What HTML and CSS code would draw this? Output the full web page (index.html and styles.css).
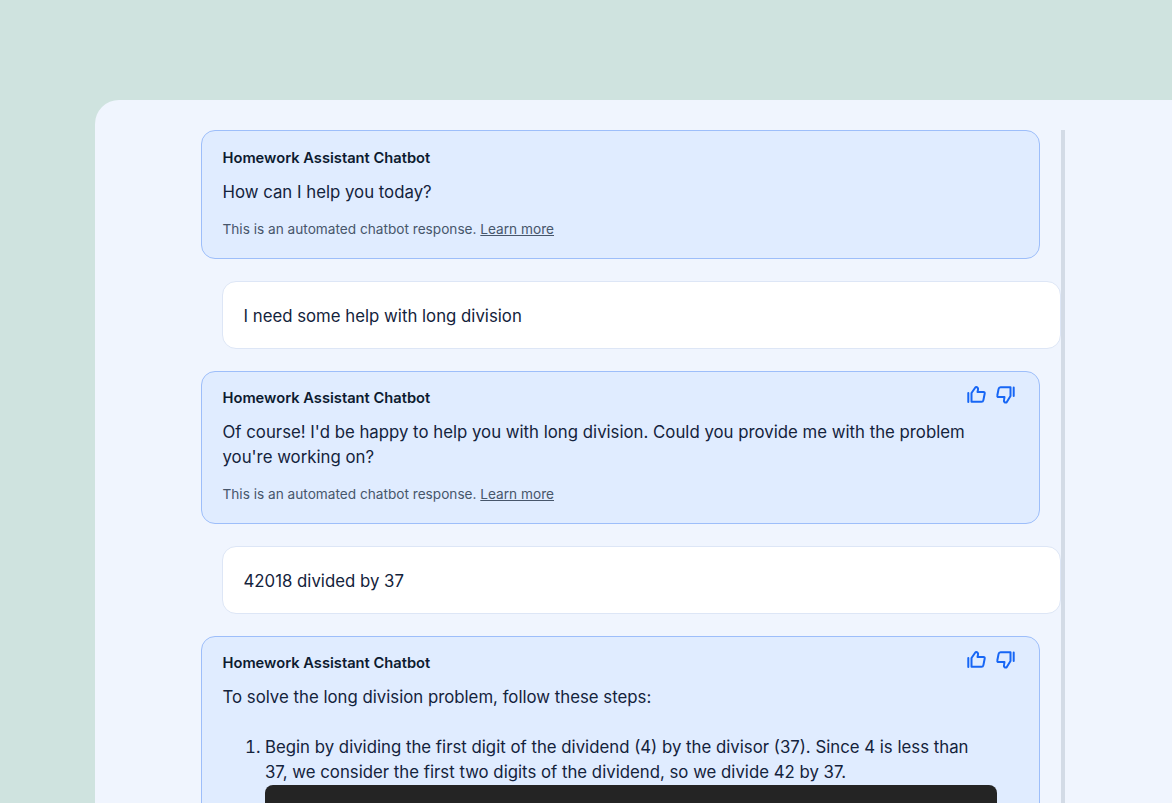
FILE: index.html
```html
<!DOCTYPE html>
<html lang="en">
<head>
<meta charset="utf-8">
<title>Homework Assistant Chatbot</title>
<link rel="stylesheet" href="styles.css">
</head>
<body>
<main class="panel">
  <div class="log">
    <article class="msg bot first">
      <header class="head"><h2 class="name">Homework Assistant Chatbot</h2></header>
      <p class="text">How can I help you today?</p>
      <p class="note">This is an automated chatbot response. <a href="#">Learn more</a></p>
    </article>
    <article class="msg user"><p class="text">I need some help with long division</p></article>
    <article class="msg bot second">
      <header class="head">
        <h2 class="name">Homework Assistant Chatbot</h2>
        <div class="votes">
          <svg class="icon" viewBox="0 0 20 20"><path d="M2.300 8v9M5.500 8 9.500 2.200c1.800-.4 2.900.9 2.500 2.600L11.500 7h6c.9 0 1.400.7 1.200 1.500l-1.300 6.600c-.2 1-.9 1.700-1.900 1.700H5.500z"/></svg>
          <svg class="icon" viewBox="0 0 20 20"><path d="M17.700 11V2.500M14.500 11 10.500 17.500c-1.800.4-2.900-.9-2.500-2.600l.5-2.900h-6c-.9 0-1.400-.7-1.200-1.500l1.300-6.600c.2-1 .9-1.700 1.900-1.700H14.500z"/></svg>
        </div>
      </header>
      <p class="text">Of course! I'd be happy to help you with long division. Could you provide me with the problem you're working on?</p>
      <p class="note">This is an automated chatbot response. <a href="#">Learn more</a></p>
    </article>
    <article class="msg user"><p class="text">42018 divided by 37</p></article>
    <article class="msg bot">
      <header class="head">
        <h2 class="name">Homework Assistant Chatbot</h2>
        <div class="votes">
          <svg class="icon" viewBox="0 0 20 20"><path d="M2.300 8v9M5.500 8 9.500 2.200c1.800-.4 2.900.9 2.500 2.600L11.500 7h6c.9 0 1.400.7 1.200 1.500l-1.300 6.600c-.2 1-.9 1.700-1.900 1.700H5.500z"/></svg>
          <svg class="icon" viewBox="0 0 20 20"><path d="M17.700 11V2.500M14.500 11 10.500 17.500c-1.800.4-2.900-.9-2.500-2.600l.5-2.900h-6c-.9 0-1.400-.7-1.200-1.500l1.300-6.600c.2-1 .9-1.700 1.900-1.700H14.500z"/></svg>
        </div>
      </header>
      <p class="text">To solve the long division problem, follow these steps:</p>
      <ol class="steps">
        <li><p class="step-text">Begin by dividing the first digit of the dividend (4) by the divisor (37). Since 4 is less than 37, we consider the first two digits of the dividend, so we divide 42 by 37.</p>
          <div class="code"></div>
        </li>
      </ol>
    </article>
  </div>
</main>
</body>
</html>
```
FILE: styles.css
```css
* { box-sizing: border-box; }
html, body { margin: 0; height: 100%; overflow: hidden; }
body {
  background: #cfe3df;
  padding: 100px 0 0 95px;
  font-family: Inter, "Liberation Sans", sans-serif;
  color: #14233c;
}
.panel {
  height: 900px;
  background: #f0f5fe;
  border-radius: 24px 0 0 0;
  padding: 30px 0 0 106px;
}
.log {
  width: 864px;
  height: 860px;
  border-right: 4px solid #d3dbe6;
  display: flex;
  flex-direction: column;
  gap: 22px;
  align-items: flex-start;
}
.msg { border-radius: 14px; flex: none; }
.bot {
  width: 839px;
  background: #e0ecff;
  border: 1px solid #9dbefa;
  padding: 16px 21px 0 20.500px;
}
.first { height: 129px; padding-top: 17px; }
.second { height: 153px; }
.user {
  width: 838.500px;
  height: 68px;
  margin-left: 21px;
  background: #fff;
  border: 1px solid #dde6f6;
  padding: 21.500px 20.500px;
}
.head { display: flex; justify-content: space-between; align-items: flex-start; height: 20px; }
.name { margin: 0; font-size: 14.700px; line-height: 20px; font-weight: 600; color: #0d1b30; }
.votes { display: flex; gap: 10.500px; margin: -3.500px 2px 0 0; }
.icon { width: 20px; height: 20px; fill: none; stroke: #1766f5; stroke-width: 2; stroke-linejoin: round; stroke-linecap: round; }
.text { margin: 12px 0 0; padding-right: 21px; font-size: 16.800px; line-height: 25.200px; }
.user .text { margin: 0; }
.note { margin: 14px 0 0; font-size: 13.650px; line-height: 20px; color: #47566b; }
.note a { color: inherit; }
.steps { margin: 25px 0 0; padding: 0 21px 0 42.500px; font-size: 16.800px; line-height: 25.200px; }
.step-text { margin: 0 0 -1px; padding-right: 4px; }
.code { height: 60px; background: #242424; border-radius: 8px; }
```
